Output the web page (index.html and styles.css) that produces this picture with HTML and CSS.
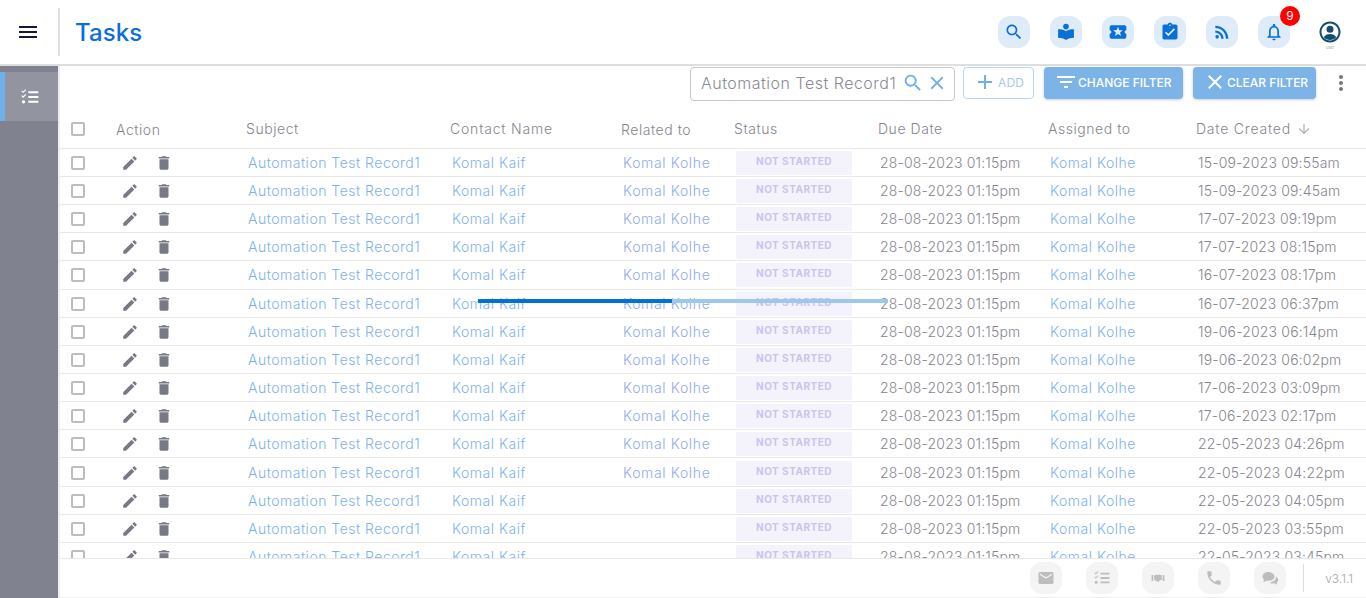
FILE: index.html
```html
<!DOCTYPE html>
<html lang="en">
<head>
  <meta charset="UTF-8">
  <meta name="viewport" content="width=device-width, initial-scale=1.0">
  <title>Tasks</title>
  <link rel="stylesheet" href="styles.css">
</head>
<body>

<svg class="sprites" aria-hidden="true">
  <symbol id="i-edit" viewBox="0 0 24 24"><path d="M3 17.25V21h3.75L17.81 9.94l-3.75-3.75L3 17.25zM20.71 7.04c.39-.39.39-1.02 0-1.41l-2.34-2.34c-.39-.39-1.02-.39-1.41 0l-1.83 1.83 3.75 3.75 1.83-1.83z"/></symbol>
  <symbol id="i-delete" viewBox="0 0 24 24"><path d="M6 19c0 1.1.9 2 2 2h8c1.1 0 2-.9 2-2V7H6v12zM19 4h-3.5l-1-1h-5l-1 1H5v2h14V4z"/></symbol>
  <symbol id="i-search" viewBox="0 0 24 24"><path d="M15.5 14h-.79l-.28-.27C15.41 12.59 16 11.11 16 9.5 16 5.91 13.09 3 9.5 3S3 5.91 3 9.5 5.91 16 9.5 16c1.61 0 3.09-.59 4.23-1.57l.27.28v.79l5 4.99L20.49 19l-4.99-5zm-6 0C7.01 14 5 11.99 5 9.5S7.01 5 9.5 5 14 7.01 14 9.5 11.99 14 9.5 14z"/></symbol>
  <symbol id="i-close" viewBox="0 0 24 24"><path d="M19 6.41L17.59 5 12 10.59 6.41 5 5 6.41 10.59 12 5 17.59 6.41 19 12 13.41 17.59 19 19 17.59 13.41 12z"/></symbol>
  <symbol id="i-checklist" viewBox="0 0 24 24"><path d="M10 5h12v2.400H10zM10 10.800h12v2.400H10zM10 16.600h12v2.400H10z"/><path d="M2.600 4.200l1.200 1.200 2.600-2.800 1 .9-3.600 3.800-2.200-2.200zM2.600 10l1.200 1.200 2.600-2.800 1 .9-3.600 3.800-2.200-2.200z"/><circle cx="4.200" cy="17.800" r="2"/></symbol>
</svg>

<header class="topbar">
  <div class="menu-cell">
    <svg class="menu-icon" viewBox="0 0 24 24"><path d="M3 18h18v-2H3v2zm0-5h18v-2H3v2zm0-7v2h18V6H3z"/></svg>
  </div>
  <h1 class="page-title">Tasks</h1>
  <div class="top-actions">
    <span class="top-btn"><svg viewBox="0 0 24 24"><use href="#i-search"/></svg></span>
    <span class="top-btn"><svg viewBox="0 0 24 24"><circle cx="12" cy="5.5" r="3.4"/><path d="M12 11.2C9.6 9.4 6 8.7 2.5 8.8v10.1c3.6 0 6.8.8 9.5 2.6 2.7-1.8 5.9-2.6 9.500-2.600V8.800c-3.500-.1-7.100.6-9.500 2.400z"/></svg></span>
    <span class="top-btn"><svg viewBox="0 0 24 24"><path d="M20 12c0-1.100.9-2 2-2V6c0-1.100-.9-2-2-2H4c-1.100 0-1.990.9-1.990 2v4c1.100 0 1.990.9 1.990 2s-.89 2-2 2v4c0 1.100.9 2 2 2h16c1.100 0 2-.9 2-2v-4c-1.100 0-2-.9-2-2zm-4.420 4.800L12 14.500l-3.580 2.300 1.080-4.120-3.290-2.690 4.240-.25L12 5.800l1.540 3.950 4.240.25-3.290 2.690 1.090 4.110z"/></svg></span>
    <span class="top-btn"><svg viewBox="0 0 24 24"><path d="M19 3h-4.180C14.400 1.840 13.300 1 12 1c-1.300 0-2.400.84-2.820 2H5c-1.100 0-2 .9-2 2v14c0 1.100.9 2 2 2h14c1.100 0 2-.9 2-2V5c0-1.100-.9-2-2-2zm-7 0c.55 0 1 .45 1 1s-.45 1-1 1-1-.45-1-1 .45-1 1-1zm-2 14l-4-4 1.410-1.410L10 14.170l6.590-6.590L18 9l-8 8z"/></svg></span>
    <span class="top-btn"><svg viewBox="0 0 24 24"><circle cx="6.180" cy="17.820" r="2.180"/><path d="M4 4.440v2.830c7.030 0 12.730 5.700 12.730 12.730h2.830c0-8.590-6.970-15.560-15.560-15.560zm0 5.660v2.830c3.900 0 7.070 3.170 7.070 7.070h2.830c0-5.470-4.430-9.900-9.900-9.900z"/></svg></span>
    <span class="top-btn bell"><svg viewBox="0 0 24 24"><path d="M12 22c1.100 0 2-.9 2-2h-4c0 1.100.9 2 2 2zm6-6v-5c0-3.070-1.630-5.640-4.500-6.320V4c0-.83-.67-1.500-1.500-1.500s-1.500.67-1.500 1.500v.68C7.640 5.360 6 7.920 6 11v5l-2 2v1h16v-1l-2-2zm-2 1H8v-6c0-2.480 1.510-4.500 4-4.500s4 2.020 4 4.500v6z"/></svg><span class="badge">9</span></span>
    <span class="user">
      <svg viewBox="0 0 24 24"><path fill-rule="evenodd" d="M12 1.500C6.200 1.500 1.500 6.200 1.500 12S6.200 22.500 12 22.500 22.500 17.800 22.500 12 17.800 1.500 12 1.500zm0 2C16.700 3.500 20.500 7.300 20.500 12S16.700 20.500 12 20.500 3.500 16.700 3.500 12 7.300 3.500 12 3.500z"/><circle cx="12" cy="9.300" r="3.500"/><path d="M5.800 17.200c1.200-2 3.600-3.200 6.200-3.200s5 1.200 6.200 3.200C16.700 19 14.500 20 12 20s-4.700-1-6.200-2.800z"/></svg>
      <span class="user-name">user</span>
    </span>
  </div>
</header>

<div class="body-wrap">
  <nav class="sidebar">
    <div class="side-item"><svg viewBox="0 0 24 24"><use href="#i-checklist"/></svg></div>
  </nav>

  <main class="content">
    <div class="toolbar">
      <div class="search-box">
        <span class="search-text">Automation Test Record1</span>
        <svg class="search-ico" viewBox="0 0 24 24"><use href="#i-search"/></svg>
        <svg class="close-ico" viewBox="0 0 24 24"><use href="#i-close"/></svg>
      </div>
      <button class="add-btn"><svg viewBox="0 0 24 24"><path d="M19 13h-6v6h-2v-6H5v-2h6V5h2v6h6v2z"/></svg>ADD</button>
      <button class="filter-btn change"><svg viewBox="0 0 24 24"><path d="M10 18h4v-2h-4v2zM3 6v2h18V6H3zm3 7h12v-2H6v2z"/></svg>CHANGE FILTER</button>
      <button class="filter-btn clear"><svg viewBox="0 0 24 24"><use href="#i-close"/></svg>CLEAR FILTER</button>
      <svg class="more-ico" viewBox="0 0 24 24"><path d="M12 8c1.100 0 2-.9 2-2s-.9-2-2-2-2 .9-2 2 .9 2 2 2zm0 2c-1.100 0-2 .9-2 2s.9 2 2 2 2-.9 2-2-.9-2-2-2zm0 6c-1.100 0-2 .9-2 2s.9 2 2 2 2-.9 2-2-.9-2-2-2z"/></svg>
    </div>

    <div class="table-wrap">
      <div class="table-head row-grid">
        <span class="check"></span>
        <span class="low">Action</span>
        <span>Subject</span>
        <span class="wide">Contact Name</span>
        <span class="low">Related to</span>
        <span>Status</span>
        <span>Due Date</span>
        <span>Assigned to</span>
        <span class="sorted"><span class="wide">Date Created</span> <svg viewBox="0 0 24 24"><path d="M20 12l-1.410-1.410L13 16.170V4h-2v12.170l-5.580-5.590L4 12l8 8 8-8z"/></svg></span>
      </div>
      <div id="rows"></div>
      <div class="loader"><span class="loader-done"></span></div>
    </div>

    <footer class="footer">
      <span class="foot-btn"><svg viewBox="0 0 24 24"><path d="M20 4H4c-1.100 0-1.990.9-1.990 2L2 18c0 1.100.9 2 2 2h16c1.100 0 2-.9 2-2V6c0-1.100-.9-2-2-2zm0 4l-8 5-8-5V6l8 5 8-5v2z"/></svg></span>
      <span class="foot-btn"><svg viewBox="0 0 24 24"><use href="#i-checklist"/></svg></span>
      <span class="foot-btn"><svg class="shake" viewBox="0 0 24 24"><path d="M1 7h3v10H1zM20 7h3v10h-3zM5.500 7.500L9 6l3 1 3-1 3.500 1.500v8L16 15.500l-3.500 3-2-.5-5-3.500z"/></svg></span>
      <span class="foot-btn"><svg viewBox="0 0 24 24"><path d="M6.620 10.790c1.440 2.830 3.760 5.140 6.590 6.590l2.200-2.200c.27-.27.67-.36 1.020-.24 1.120.37 2.330.57 3.570.57.55 0 1 .45 1 1V20c0 .55-.45 1-1 1-9.390 0-17-7.610-17-17 0-.55.45-1 1-1h3.500c.55 0 1 .45 1 1 0 1.250.2 2.450.57 3.570.11.35.03.74-.25 1.020l-2.200 2.200z"/></svg></span>
      <span class="foot-btn"><svg viewBox="0 0 24 24"><path d="M10 4C5.600 4 2 6.700 2 10c0 1.500.8 2.900 2 4l-1 3.500L7.500 15.500c.8.2 1.600.3 2.500.3 4.400 0 8-2.600 8-5.800S14.400 4 10 4z"/><path d="M19.500 9.500c.3.500.5 1 .5 1.500 0 3.800-3.900 6.500-8.500 6.800 1.200 1 2.900 1.500 4.500 1.500.6 0 1.200-.1 1.800-.2L21.500 21l-.5-3c1.200-.9 2-2.100 2-3.500 0-2-1.400-3.800-3.500-5z"/></svg></span>
      <span class="foot-line"></span>
      <span class="version">v3.1.1</span>
    </footer>
  </main>
</div>

<script>
// rows of the task list, [created date, has related contact]
var tasks = [
  ["15-09-2023 09:55am", true],
  ["15-09-2023 09:45am", true],
  ["17-07-2023 09:19pm", true],
  ["17-07-2023 08:15pm", true],
  ["16-07-2023 08:17pm", true],
  ["16-07-2023 06:37pm", true],
  ["19-06-2023 06:14pm", true],
  ["19-06-2023 06:02pm", true],
  ["17-06-2023 03:09pm", true],
  ["17-06-2023 02:17pm", true],
  ["22-05-2023 04:26pm", true],
  ["22-05-2023 04:22pm", true],
  ["22-05-2023 04:05pm", false],
  ["22-05-2023 03:55pm", false],
  ["22-05-2023 03:45pm", false]
];

var html = "";
tasks.forEach(function (t) {
  html += '<div class="task-row row-grid">' +
    '<span class="check"></span>' +
    '<span class="row-actions"><svg viewBox="0 0 24 24"><use href="#i-edit"/></svg><svg viewBox="0 0 24 24"><use href="#i-delete"/></svg></span>' +
    '<a class="link">Automation Test Record1</a>' +
    '<a class="link">Komal Kaif</a>' +
    '<a class="link lilac">' + (t[1] ? "Komal Kolhe" : "") + '</a>' +
    '<span><span class="status">NOT STARTED</span></span>' +
    '<span class="date">28-08-2023 01:15pm</span>' +
    '<a class="link">Komal Kolhe</a>' +
    '<span class="date">' + t[0] + '</span>' +
    '</div>';
});
document.getElementById("rows").innerHTML = html;
</script>

</body>
</html>
```

FILE: styles.css
```css
* {
  box-sizing: border-box;
}

body {
  margin: 0;
  height: 100vh;
  overflow: hidden;
  display: flex;
  flex-direction: column;
  background-color: #fff;
  font-family: Inter, "Open Sans", sans-serif;
  font-weight: 300;
}

.sprites {
  display: none;
}

svg {
  fill: currentColor;
  display: block;
  flex-shrink: 0;
}

/* Top bar */
.topbar {
  height: 66px;
  flex-shrink: 0;
  display: flex;
  align-items: center;
  border-bottom: 2px solid #dedede;
}

.menu-cell {
  width: 60px;
  height: 48px;
  display: flex;
  align-items: center;
  justify-content: center;
  padding-right: 2px;
  border-right: 2px solid #dedede;
}

.menu-icon {
  width: 24px;
  height: 24px;
  color: #10183a;
}

.page-title {
  margin: 0 0 0 15px;
  font-size: 24px;
  font-weight: 500;
  letter-spacing: 0.1px;
  color: #0a6fd6;
}

.top-actions {
  margin-left: auto;
  display: flex;
  align-items: center;
  gap: 20px;
  padding-right: 24px;
}

.top-btn {
  position: relative;
  width: 32px;
  height: 32px;
  border-radius: 12px;
  background-color: #deebf8;
  color: #0a6fd6;
  display: flex;
  align-items: center;
  justify-content: center;
}

.top-btn svg {
  width: 20px;
  height: 20px;
}

.badge {
  position: absolute;
  top: -10px;
  right: -10px;
  width: 20px;
  height: 20px;
  border-radius: 50%;
  background-color: #fe0000;
  color: #fff;
  font-size: 12px;
  font-weight: 400;
  text-align: center;
  line-height: 20px;
}

.user {
  width: 24px;
  margin-left: 8px;
  padding-top: 8px;
  display: flex;
  flex-direction: column;
  align-items: center;
  color: #134e6f;
}

.user svg {
  width: 24px;
  height: 24px;
}

.user-name {
  font-size: 4px;
  line-height: 8px;
  color: #888;
}

/* Sidebar */
.body-wrap {
  flex: 1;
  display: flex;
  min-height: 0;
}

.sidebar {
  width: 60px;
  flex-shrink: 0;
  padding-top: 6px;
  background-color: #80838f;
  border-right: 2px solid #eee;
}

.side-item {
  height: 49px;
  padding-right: 3px;
  background-color: #92949f;
  border-left: 5px solid #6db0ea;
  color: #fff;
  display: flex;
  align-items: center;
  justify-content: center;
}

.side-item svg {
  width: 20px;
  height: 20px;
}

/* Main */
.content {
  flex: 1;
  min-width: 0;
  display: flex;
  flex-direction: column;
}

.toolbar {
  height: 44px;
  flex-shrink: 0;
  display: flex;
  align-items: flex-start;
  justify-content: flex-end;
  padding-top: 1px;
  padding-right: 13px;
}

.search-box {
  width: 265px;
  height: 34px;
  display: flex;
  align-items: center;
  padding: 0 6px 2px 10px;
  border: 1px solid #c8c8c8;
  border-radius: 4px;
  color: #74aee8;
}

.search-text {
  flex: 1;
  font-size: 16px;
  letter-spacing: 0.5px;
  color: #8a8a94;
  white-space: nowrap;
  overflow: hidden;
}

.search-ico,
.close-ico {
  width: 22px;
  height: 22px;
}

.search-ico {
  margin-right: 2px;
}

.add-btn,
.filter-btn {
  height: 32px;
  display: flex;
  align-items: center;
  padding-bottom: 3px;
  border-radius: 4px;
  font-family: inherit;
  font-size: 12px;
  font-weight: 500;
  cursor: pointer;
}

.add-btn {
  width: 71px;
  margin-left: 8px;
  padding-left: 9px;
  padding-right: 0;
  border: 1px solid #b4d5f3;
  background-color: #fff;
  color: #a8c8ee;
  font-weight: 400;
  letter-spacing: 0.2px;
}

.add-btn svg {
  width: 24px;
  height: 24px;
  margin-right: 1px;
  color: #74aee8;
}

.filter-btn {
  margin-left: 10px;
  padding-left: 10px;
  padding-right: 0;
  border: 0;
  background-color: #7cb4e8;
  color: #fff;
  box-shadow: 0 1px 3px rgba(0, 0, 0, 0.2);
}

.filter-btn svg {
  width: 24px;
  height: 24px;
}

.change {
  width: 139px;
}

.clear {
  width: 123px;
}

.more-ico {
  width: 24px;
  height: 24px;
  margin: 4px 0 0 13px;
  color: #777;
}

/* Table */
.table-wrap {
  position: relative;
  flex: 1;
  min-height: 0;
  overflow: hidden;
}

.row-grid {
  display: grid;
  grid-template-columns: 45px 130px 204px 171px 113px 144px 170px 148px 1fr;
  align-items: center;
  padding-left: 11px;
  border-bottom: 1px solid #e8e8e8;
}

.table-head {
  height: 38.75px;
  font-size: 14px;
  letter-spacing: 0.55px;
  color: #85858f;
}

.wide {
  letter-spacing: 0.8px;
}

.low {
  padding-top: 2px;
}

.sorted {
  display: flex;
  align-items: center;
  gap: 5px;
}

.sorted svg {
  width: 16px;
  height: 16px;
  color: #b5b5b5;
}

.task-row {
  height: 28.17px;
  font-size: 14px;
}

.check {
  width: 14px;
  height: 14px;
  border: 2px solid #bdbdbd;
  border-radius: 2px;
}

.task-row .check,
.row-actions,
.status {
  margin-top: 1px;
}

.row-actions {
  display: flex;
  gap: 16px;
  padding-left: 5px;
  color: #777985;
}

.row-actions svg {
  width: 18px;
  height: 18px;
}

.link {
  padding-left: 2px;
  color: #7eb2ee;
  letter-spacing: 0.5px;
  white-space: nowrap;
}

.lilac {
  color: #8fabea;
  letter-spacing: 0.64px;
}

.date {
  padding-left: 2px;
  color: #85858f;
  letter-spacing: 0.17px;
  white-space: nowrap;
}

.status {
  display: block;
  width: 116px;
  height: 24px;
  margin-left: 2px;
  border-radius: 2px;
  background-color: #f4f3fb;
  color: #c9c4ee;
  font-size: 10px;
  font-weight: 700;
  letter-spacing: 0.5px;
  line-height: 21px;
  text-align: center;
}

.loader {
  position: absolute;
  left: 418px;
  top: 189px;
  width: 410px;
  height: 4px;
  background-color: #9cc8ee;
}

.loader-done {
  display: block;
  width: 194px;
  height: 4px;
  background-color: #0071d9;
}

/* Footer */
.footer {
  height: 40px;
  flex-shrink: 0;
  display: flex;
  align-items: center;
  gap: 24px;
  padding-right: 13px;
  justify-content: flex-end;
  border-top: 1px solid #e8e8e8;
  border-bottom: 1px solid #eee;
}

.foot-btn {
  width: 32px;
  height: 32px;
  border-radius: 12px;
  background-color: #f4f4f4;
  color: #bdbdbd;
  display: flex;
  align-items: center;
  justify-content: center;
}

.foot-btn svg {
  width: 18px;
  height: 18px;
}

.foot-btn .shake {
  width: 14px;
  height: 14px;
}

.foot-line {
  width: 1px;
  height: 28px;
  margin-left: -7px;
  background-color: #ddd;
}

.version {
  margin-left: -3px;
  font-size: 12px;
  color: #a5a5a5;
}
```
